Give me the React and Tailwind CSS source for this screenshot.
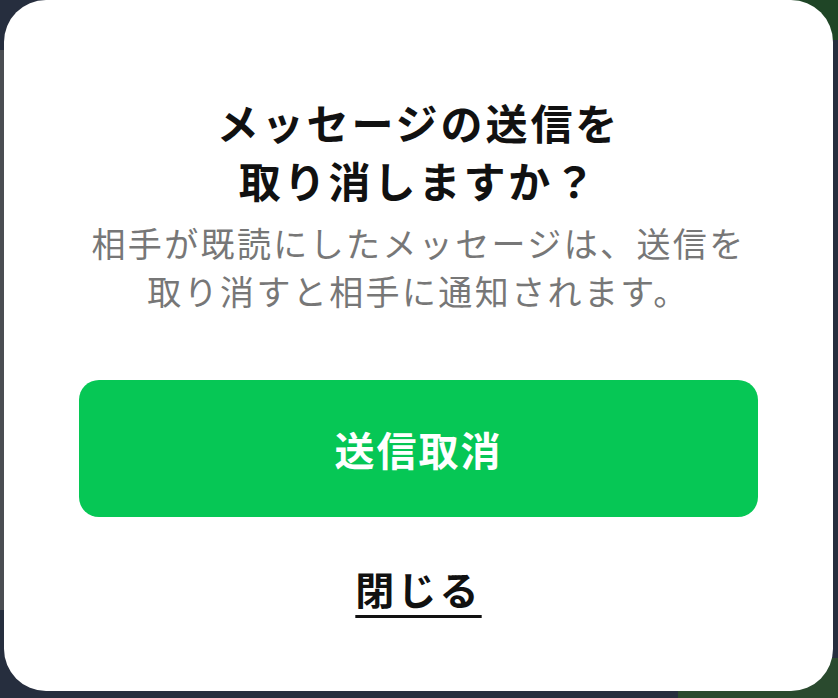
import React from 'react'

const jp = { fontFamily: '"Noto Sans CJK JP", "Noto Sans", sans-serif' }

export default function App() {
  return (
    <div className="relative w-full h-screen overflow-hidden bg-[#262e3e]" style={jp}>
      {/* chat screen peeking around the sheet */}
      <div className="absolute top-0 right-0 w-[90px] h-[40px] bg-[#1f4526]" />
      <div className="absolute left-0 top-[50px] w-[4px] h-[560px] bg-[#4a4d52]" />
      <div className="absolute bottom-0 right-0 w-[160px] h-[40px] bg-[#2a4a2e]" />

      <div className="relative ml-[4px] mr-[5px] h-[691px] bg-white rounded-[42px] px-[75px] pt-[93px] flex flex-col items-center">
        <h1 className="text-[42px] leading-[58px] font-bold tracking-[0.07em] text-[#111] text-center">
          メッセージの送信を
          <br />
          取り消しますか？
        </h1>
        <p className="mt-[10px] text-[34px] leading-[48px] tracking-[0.07em] text-[#777] text-center">
          相手が既読にしたメッセージは、送信を
          <br />
          取り消すと相手に通知されます。
        </p>
        <button className="mt-[65px] w-full h-[137px] rounded-[20px] bg-[#06c755] text-white text-[40px] font-bold tracking-[0.05em]">
          送信取消
        </button>
        <button className="mt-[46px] text-[39px] leading-[50px] font-bold tracking-[0.08em] text-[#111] underline decoration-[3px] underline-offset-[10px]">
          閉じる
        </button>
      </div>
    </div>
  )
}
